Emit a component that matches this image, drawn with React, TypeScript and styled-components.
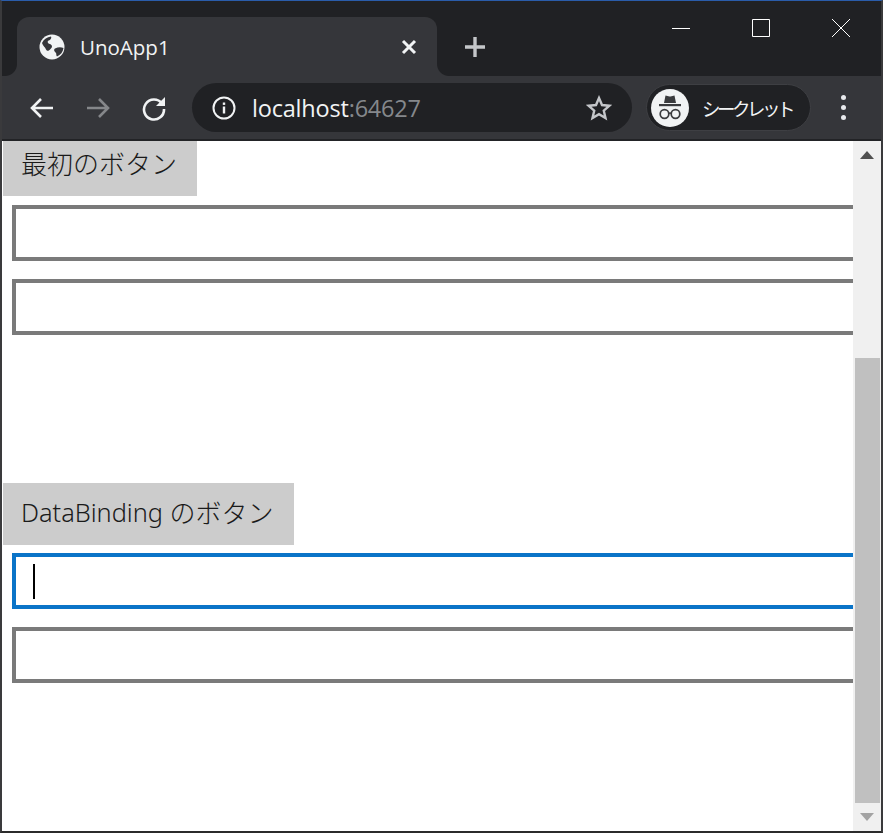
import React from 'react'
import styled, { createGlobalStyle } from 'styled-components'

const GlobalStyle = createGlobalStyle`
    html, body {
        margin: 0;
        padding: 0;
        background: #202124;
    }
`

const Frame = styled.div`
    width: 883px;
    height: 833px;
    box-sizing: border-box;
    display: flex;
    flex-direction: column;
    background: #202124;
    border-top: 1px solid #2a5caa;
    border-left: 2px solid #3a3a3c;
    border-right: 2px solid #3a3a3c;
    border-bottom: 2px solid #2b2b2b;
    font-family: 'Open Sans', 'Noto Sans CJK JP', sans-serif;
    overflow: hidden;
`

const TabStrip = styled.div`
    height: 75px;
    flex: none;
    display: flex;
    align-items: flex-end;
    padding-left: 15px;
    background: #202124;
`

const Tab = styled.div`
    position: relative;
    width: 420px;
    height: 59px;
    box-sizing: border-box;
    display: flex;
    align-items: center;
    padding: 0 19px 0 22px;
    background: #35363a;
    border-radius: 12px 12px 0 0;
    color: #f1f3f4;
    font-size: 20.5px;

    &::before,
    &::after {
        content: '';
        position: absolute;
        bottom: 0;
        width: 12px;
        height: 12px;
    }

    &::before {
        left: -12px;
        background: radial-gradient(circle at 0 0, transparent 11.5px, #35363a 12.5px);
    }

    &::after {
        right: -12px;
        background: radial-gradient(circle at 100% 0, transparent 11.5px, #35363a 12.5px);
    }
`

const TabTitle = styled.span`
    flex: 1;
    margin-left: 15px;
`

const NewTab = styled.div`
    margin: 0 0 14px 23px;
    height: 30px;
    width: 30px;
    display: flex;
    align-items: center;
    justify-content: center;
`

const WindowControls = styled.div`
    margin-left: auto;
    align-self: flex-start;
    display: flex;
    align-items: center;
    padding-top: 15px;
`

const ControlBox = styled.div`
    width: 80px;
    height: 24px;
    display: flex;
    align-items: center;
    justify-content: center;
`

const Toolbar = styled.div`
    height: 63px;
    flex: none;
    display: flex;
    align-items: center;
    padding: 0 0 0 27px;
    background: #35363a;
    border-bottom: 2px solid #222326;
`

const NavButton = styled.div<{ $width: number }>`
    width: ${(p) => p.$width}px;
    display: flex;
    align-items: center;
    flex: none;
`

const Omnibox = styled.div`
    width: 440px;
    height: 49px;
    margin-left: 13px;
    box-sizing: border-box;
    display: flex;
    align-items: center;
    padding: 0 20px 0 20px;
    background: #202124;
    border-radius: 25px;
    font-size: 23.5px;
    color: #f1f3f4;
`

const Host = styled.span`
    flex: 1;
    margin-left: 16px;
    letter-spacing: -0.2px;
`

const Port = styled.span`
    color: #85888c;
`

const Profile = styled.div`
    width: 165px;
    height: 47px;
    margin-left: 14px;
    box-sizing: border-box;
    display: flex;
    align-items: center;
    padding-left: 4px;
    background: #202124;
    border: 1px solid #3e3f43;
    border-radius: 24px;
    color: #f1f3f4;
    font-size: 18.5px;
`

const ProfileBadge = styled.div`
    width: 38px;
    height: 38px;
    flex: none;
    border-radius: 50%;
    background: #f1f3f4;
    display: flex;
    align-items: center;
    justify-content: center;
`

const ProfileLabel = styled.span`
    margin-left: 13px;
    letter-spacing: -3.5px;
    white-space: nowrap;
`

const MenuDots = styled.div`
    margin-left: 30px;
    display: flex;
    flex-direction: column;
    gap: 5px;
`

const Dot = styled.i`
    display: block;
    width: 5px;
    height: 5px;
    border-radius: 50%;
    background: #e8eaed;
`

const Viewport = styled.div`
    flex: 1;
    min-height: 0;
    display: flex;
    background: #fff;
`

const Page = styled.div`
    flex: 1;
    min-width: 0;
    display: flex;
    flex-direction: column;
    align-items: flex-start;
    overflow: hidden;
    padding-left: 1px;
`

const PageButton = styled.div<{ $height: number; $top?: number; $lift: number }>`
    height: ${(p) => p.$height}px;
    margin-top: ${(p) => p.$top ?? 0}px;
    box-sizing: border-box;
    display: flex;
    align-items: center;
    padding: 0 20px ${(p) => p.$lift}px 18px;
    background: #cccccc;
    color: #1a1a1a;
    font-family: 'Noto Sans', 'Noto Sans CJK JP', sans-serif;
    font-weight: 300;
    font-size: 26px;
    white-space: pre;
`

const Latin = styled.span`
    font-size: 25.3px;
`

const Field = styled.div<{ $focused?: boolean; $top: number }>`
    width: 860px;
    height: 56px;
    flex: none;
    box-sizing: border-box;
    margin: ${(p) => p.$top}px 0 0 9px;
    display: flex;
    align-items: center;
    padding-left: 17px;
    background: #fff;
    border: 4px solid ${(p) => (p.$focused ? '#0a74c8' : '#7a7a7a')};
`

const Caret = styled.div`
    width: 2px;
    height: 35px;
    background: #000;
`

const Scrollbar = styled.div`
    width: 28px;
    flex: none;
    display: flex;
    flex-direction: column;
    align-items: center;
    background: #f0f0f0;
`

const ArrowCell = styled.div`
    height: 28px;
    width: 100%;
    flex: none;
    display: flex;
    align-items: center;
    justify-content: center;
`

const ThumbGap = styled.div`
    height: 189px;
    flex: none;
`

const Thumb = styled.div`
    width: 25px;
    flex: 1;
    margin-left: 1px;
    background: #c0c0c0;
`

const Globe = () => (
    <svg width='26' height='26' viewBox='0 0 26 26'>
        <circle cx='13' cy='13' r='12.5' fill='#f1f3f4' />
        <path
            d='M3 9c2-4 5-6 9-6.500 1 2-1 3.500-3 4.500-1 1.500.5 3 2.500 3.200 2 1 2 3 0 4.800-1.500 2-3.500 2.500-4.500.5C6 13 4 12 3 9z'
            fill='#35363a'
        />
        <path
            d='M16 14.500c3-1.500 6-1.500 8.500-.5-.5 4-3 7-6.500 8.500-1-1-.5-2.500-1-3.500-1-1-3-3-1-4.500z'
            fill='#35363a'
        />
    </svg>
)

const Glyph = ({
    size,
    color,
    width,
    d,
    box = 24,
}: {
    size: number
    color: string
    width: number
    d: string
    box?: number
}) => (
    <svg
        width={size}
        height={size}
        viewBox={`0 0 ${box} ${box}`}
        fill='none'
        stroke={color}
        strokeWidth={width}
    >
        <path d={d} />
    </svg>
)

const Incognito = () => (
    <svg width='28' height='28' viewBox='0 0 28 28'>
        <path d='M8 9l1.500-7.500 4 1 1 0 4-1L20 9z' fill='#3a3b3e' />
        <rect x='3' y='10' width='22' height='2.200' fill='#3a3b3e' />
        <circle cx='8.500' cy='20' r='4.300' fill='none' stroke='#3a3b3e' strokeWidth='1.700' />
        <circle cx='19.500' cy='20' r='4.300' fill='none' stroke='#3a3b3e' strokeWidth='1.700' />
        <path d='M12.500 19.500c1-.6 2-.6 3 0' fill='none' stroke='#3a3b3e' strokeWidth='1.500' />
    </svg>
)

const App = () => (
    <>
        <GlobalStyle />
        <Frame>
            <TabStrip>
                <Tab>
                    <Globe />
                    <TabTitle>UnoApp1</TabTitle>
                    <Glyph size={18} color='#f1f3f4' width={3} box={18} d='M3 3l12 12M15 3L3 15' />
                </Tab>
                <NewTab>
                    <Glyph size={22} color='#c4c6c9' width={3.4} box={22} d='M11 1v20M1 11h20' />
                </NewTab>
                <WindowControls>
                    <ControlBox>
                        <Glyph size={20} color='#fff' width={1} box={20} d='M1 10.500h18' />
                    </ControlBox>
                    <ControlBox>
                        <Glyph size={20} color='#fff' width={1} box={20} d='M1.500 1.500h17v17h-17z' />
                    </ControlBox>
                    <ControlBox>
                        <Glyph size={20} color='#fff' width={1} box={20} d='M1 1l18 18M19 1L1 19' />
                    </ControlBox>
                </WindowControls>
            </TabStrip>
            <Toolbar>
                <NavButton $width={56}>
                    <Glyph size={26} color='#f1f3f4' width={2.6} box={26} d='M24 13H3M12 4l-9 9 9 9' />
                </NavButton>
                <NavButton $width={56}>
                    <Glyph size={26} color='#85878a' width={2.6} box={26} d='M2 13h21M14 4l9 9-9 9' />
                </NavButton>
                <NavButton $width={38}>
                    <svg width='26' height='26' viewBox='0 0 26 26'>
                        <path
                            d='M21 8.500A10 10 0 1 0 23 14'
                            fill='none'
                            stroke='#f1f3f4'
                            strokeWidth='2.600'
                        />
                        <path d='M24 2v9h-9z' fill='#f1f3f4' />
                    </svg>
                </NavButton>
                <Omnibox>
                    <svg width='24' height='24' viewBox='0 0 24 24'>
                        <circle cx='12' cy='12' r='10.500' fill='none' stroke='#f1f3f4' strokeWidth='2' />
                        <rect x='10.800' y='10.500' width='2.400' height='7' fill='#f1f3f4' />
                        <rect x='10.800' y='6.500' width='2.400' height='2.400' fill='#f1f3f4' />
                    </svg>
                    <Host>
                        localhost<Port>:64627</Port>
                    </Host>
                    <svg width='26' height='26' viewBox='0 0 26 26'>
                        <path
                            d='M13 3l3 7 7.500.7-5.700 5 1.700 7.300L13 19.200 6.500 23l1.700-7.300-5.700-5L10 10z'
                            fill='none'
                            stroke='#c4c6c9'
                            strokeWidth='2.400'
                        />
                    </svg>
                </Omnibox>
                <Profile>
                    <ProfileBadge>
                        <Incognito />
                    </ProfileBadge>
                    <ProfileLabel>シークレット</ProfileLabel>
                </Profile>
                <MenuDots>
                    <Dot />
                    <Dot />
                    <Dot />
                </MenuDots>
            </Toolbar>
            <Viewport>
                <Page>
                    <PageButton $height={55} $lift={11}>
                        最初のボタン
                    </PageButton>
                    <Field $top={9} />
                    <Field $top={18} />
                    <PageButton $height={62} $top={148} $lift={4}>
                        <Latin>DataBinding </Latin>のボタン
                    </PageButton>
                    <Field $top={8} $focused>
                        <Caret />
                    </Field>
                    <Field $top={18} />
                </Page>
                <Scrollbar>
                    <ArrowCell>
                        <svg width='14' height='8' viewBox='0 0 14 8'>
                            <path d='M7 0l7 8H0z' fill='#505050' />
                        </svg>
                    </ArrowCell>
                    <ThumbGap />
                    <Thumb />
                    <ArrowCell>
                        <svg width='14' height='8' viewBox='0 0 14 8'>
                            <path d='M0 0h14L7 8z' fill='#a3a3a3' />
                        </svg>
                    </ArrowCell>
                </Scrollbar>
            </Viewport>
        </Frame>
    </>
)

export default App
